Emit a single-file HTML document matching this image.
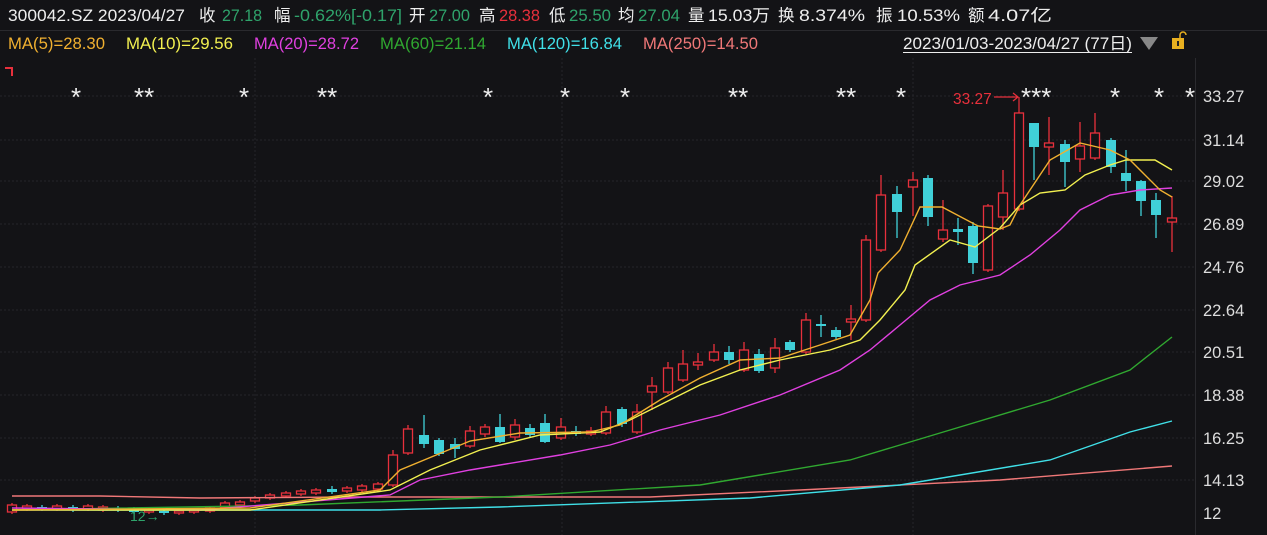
<!DOCTYPE html>
<html><head><meta charset="utf-8"><style>
html,body{margin:0;padding:0;background:#131316;width:1267px;height:535px;overflow:hidden}
svg{display:block}
text{font-family:"Liberation Sans","Noto Sans CJK SC",sans-serif}
.r{fill:#131316;stroke:#e8303c;stroke-width:1.3}
.c{fill:#40d0d8}
</style></head><body>
<svg width="1267" height="535" viewBox="0 0 1267 535" xmlns="http://www.w3.org/2000/svg">
<rect width="1267" height="535" fill="#131316"/>
<line x1="0" y1="30.5" x2="1267" y2="30.5" stroke="#2a2a2e"/>
<g font-size="16.5" fill="#eee">
<text x="8" y="21" textLength="177" lengthAdjust="spacingAndGlyphs">300042.SZ 2023/04/27</text>
<text x="199" y="21">收</text><text x="222" y="21" fill="#2fa36b" textLength="40" lengthAdjust="spacingAndGlyphs">27.18</text>
<text x="274" y="21">幅</text><text x="294" y="21" fill="#2fa36b" textLength="108" lengthAdjust="spacingAndGlyphs">-0.62%[-0.17]</text>
<text x="409" y="21">开</text><text x="429" y="21" fill="#2fa36b" textLength="41" lengthAdjust="spacingAndGlyphs">27.00</text>
<text x="479" y="21">高</text><text x="499" y="21" fill="#e8303c" textLength="41" lengthAdjust="spacingAndGlyphs">28.38</text>
<text x="549" y="21">低</text><text x="569" y="21" fill="#2fa36b" textLength="42" lengthAdjust="spacingAndGlyphs">25.50</text>
<text x="618" y="21">均</text><text x="638" y="21" fill="#2fa36b" textLength="42" lengthAdjust="spacingAndGlyphs">27.04</text>
<text x="688" y="21">量</text><text x="708" y="21" textLength="62" lengthAdjust="spacingAndGlyphs">15.03万</text>
<text x="778" y="21">换</text><text x="799" y="21" textLength="66" lengthAdjust="spacingAndGlyphs">8.374%</text>
<text x="876" y="21">振</text><text x="897" y="21" textLength="63" lengthAdjust="spacingAndGlyphs">10.53%</text>
<text x="968" y="21">额</text><text x="988" y="21" textLength="64" lengthAdjust="spacingAndGlyphs">4.07亿</text>
</g>
<g font-size="16.5">
<text x="8" y="49" fill="#f0b030" textLength="97" lengthAdjust="spacingAndGlyphs">MA(5)=28.30</text>
<text x="126" y="49" fill="#f2f050" textLength="107" lengthAdjust="spacingAndGlyphs">MA(10)=29.56</text>
<text x="254" y="49" fill="#e040e0" textLength="105" lengthAdjust="spacingAndGlyphs">MA(20)=28.72</text>
<text x="380" y="49" fill="#30a830" textLength="106" lengthAdjust="spacingAndGlyphs">MA(60)=21.14</text>
<text x="507" y="49" fill="#40e0e8" textLength="115" lengthAdjust="spacingAndGlyphs">MA(120)=16.84</text>
<text x="643" y="49" fill="#f07878" textLength="115" lengthAdjust="spacingAndGlyphs">MA(250)=14.50</text>
<text x="903" y="49" fill="#eee" textLength="229" lengthAdjust="spacingAndGlyphs">2023/01/03-2023/04/27 (77日)</text>
</g>
<line x1="903" y1="52.5" x2="1132" y2="52.5" stroke="#eee"/>
<polygon points="1140,37 1158,37 1149,50" fill="#888"/>
<rect x="1172" y="38" width="12" height="11" fill="#e8b020"/>
<rect x="1177" y="41" width="2" height="5" fill="#222"/>
<path d="M1180 38 v-3 a3 3 0 0 1 6 0" fill="none" stroke="#e8b020" stroke-width="1.5"/>
<path d="M5 68 H12 V76" fill="none" stroke="#e8303c" stroke-width="2"/>
<g stroke="#26262a" stroke-dasharray="2,2">
<line x1="0" y1="96" x2="1195" y2="96"/><line x1="0" y1="140" x2="1195" y2="140"/><line x1="0" y1="181" x2="1195" y2="181"/><line x1="0" y1="224" x2="1195" y2="224"/><line x1="0" y1="267" x2="1195" y2="267"/><line x1="0" y1="310" x2="1195" y2="310"/><line x1="0" y1="352" x2="1195" y2="352"/><line x1="0" y1="395" x2="1195" y2="395"/><line x1="0" y1="438" x2="1195" y2="438"/><line x1="0" y1="480" x2="1195" y2="480"/>
<line x1="255" y1="58" x2="255" y2="535"/><line x1="562" y1="58" x2="562" y2="535"/><line x1="913" y1="58" x2="913" y2="535"/>
</g>
<line x1="1195.5" y1="58" x2="1195.5" y2="535" stroke="#2a2a2e"/>
<g font-size="16.5" fill="#ddd">
<text x="1203" y="102">33.27</text><text x="1203" y="146">31.14</text><text x="1203" y="187">29.02</text><text x="1203" y="230">26.89</text><text x="1203" y="273">24.76</text><text x="1203" y="316">22.64</text><text x="1203" y="358">20.51</text><text x="1203" y="401">18.38</text><text x="1203" y="444">16.25</text><text x="1203" y="486">14.13</text><text x="1203" y="519">12</text>
</g>
<g font-size="26" fill="#eee">
<text x="71" y="106">*</text><text x="134" y="106">**</text><text x="239" y="106">*</text><text x="317" y="106">**</text><text x="483" y="106">*</text><text x="560" y="106">*</text><text x="620" y="106">*</text><text x="728" y="106">**</text><text x="836" y="106">**</text><text x="896" y="106">*</text><text x="1021" y="106">***</text><text x="1110" y="106">*</text><text x="1154" y="106">*</text><text x="1185" y="106">*</text>
</g>
<text x="953" y="104" font-size="15.5" fill="#e8303c">33.27</text>
<path d="M994 97 H1018 M1013 93 L1018 97 L1013 101 M1019 97 V112" fill="none" stroke="#e8303c" stroke-width="1.2"/>
<path fill="none" stroke="#e8303c" stroke-width="1.3" d="M12 503V514M27 504V511M57 504V511M88 504V511M103 505V512M149 508V514M179 509V515M194 508V514M210 506V513M225 501V509M240 500V507M255 496V503M270 493V500M286 491V498M301 489V496M316 488V495M347 486V493M362 484V492M378 482V491M393 450V487M408 425V455M470 426V448M485 424V437M515 419V440M561 418V440M591 427V436M606 406V435M637 404V434M652 377V410M668 362V394M683 350V382M698 353V370M714 344V362M744 342V372M775 338V373M806 313V354M851 305V340M866 235V322M881 175V252M913 172V216M943 200V242M988 204V272M1003 170V230M1019 112V211M1049 117V175M1080 122V172M1095 113V160M1172 196V252"/>
<path fill="none" stroke="#40d0d8" stroke-width="1.3" d="M42 505V511M73 505V512M118 506V512M134 507V514M164 509V515M332 486V494M424 415V448M439 438V456M455 438V458M500 414V443M530 424V437M545 414V443M576 426V436M622 407V427M729 346V364M759 349V373M790 340V352M821 315V337M836 327V339M897 186V238M928 175V226M958 218V245M973 222V274M1034 123V180M1065 140V187M1111 138V173M1126 150V191M1141 180V216M1156 193V238"/>
<g>
<rect class="r" x="7.5" y="505" width="9" height="7"/><rect class="r" x="22.5" y="506" width="9" height="3"/><rect class="r" x="52.5" y="506" width="9" height="3"/><rect class="r" x="83.5" y="506" width="9" height="3"/><rect class="r" x="98.5" y="507" width="9" height="3"/><rect class="r" x="144.5" y="510" width="9" height="2"/><rect class="r" x="174.5" y="511" width="9" height="2"/><rect class="r" x="189.5" y="510" width="9" height="2"/><rect class="r" x="205.5" y="508" width="9" height="3"/><rect class="r" x="220.5" y="503" width="9" height="4"/><rect class="r" x="235.5" y="502" width="9" height="3"/><rect class="r" x="250.5" y="498" width="9" height="3"/><rect class="r" x="265.5" y="495" width="9" height="3"/><rect class="r" x="281.5" y="493" width="9" height="3"/><rect class="r" x="296.5" y="491" width="9" height="3"/><rect class="r" x="311.5" y="490" width="9" height="3"/><rect class="r" x="342.5" y="488" width="9" height="3"/><rect class="r" x="357.5" y="486" width="9" height="4"/><rect class="r" x="373.5" y="484" width="9" height="5"/>
<rect class="r" x="388.5" y="455" width="9" height="30"/><rect class="r" x="403.5" y="429" width="9" height="24"/><rect class="r" x="465.5" y="431" width="9" height="15"/><rect class="r" x="480.5" y="427" width="9" height="7"/><rect class="r" x="510.5" y="425" width="9" height="12"/><rect class="r" x="556.5" y="427" width="9" height="11"/><rect class="r" x="586.5" y="431" width="9" height="3"/><rect class="r" x="601.5" y="412" width="9" height="21"/><rect class="r" x="632.5" y="412" width="9" height="20"/><rect class="r" x="647.5" y="386" width="9" height="6"/><rect class="r" x="663.5" y="368" width="9" height="24"/><rect class="r" x="678.5" y="364" width="9" height="16"/><rect class="r" x="693.5" y="362" width="9" height="3"/><rect class="r" x="709.5" y="352" width="9" height="8"/><rect class="r" x="739.5" y="350" width="9" height="20"/><rect class="r" x="770.5" y="348" width="9" height="20"/><rect class="r" x="801.5" y="320" width="9" height="32"/><rect class="r" x="846.5" y="319" width="9" height="3"/><rect class="r" x="861.5" y="240" width="9" height="80"/><rect class="r" x="876.5" y="195" width="9" height="55"/><rect class="r" x="908.5" y="180" width="9" height="7"/><rect class="r" x="938.5" y="230" width="9" height="9"/><rect class="r" x="983.5" y="206" width="9" height="64"/><rect class="r" x="998.5" y="193" width="9" height="24"/><rect class="r" x="1014.5" y="113" width="9" height="96"/><rect class="r" x="1044.5" y="143" width="9" height="4"/><rect class="r" x="1075.5" y="146" width="9" height="13"/><rect class="r" x="1090.5" y="133" width="9" height="25"/><rect class="r" x="1167.5" y="218" width="9" height="4"/>
<rect class="c" x="37" y="507" width="10" height="2"/><rect class="c" x="68" y="507" width="10" height="3"/><rect class="c" x="113" y="508" width="10" height="2"/><rect class="c" x="129" y="509" width="10" height="3"/><rect class="c" x="159" y="511" width="10" height="2"/><rect class="c" x="327" y="489" width="10" height="3"/><rect class="c" x="419" y="435" width="10" height="9"/><rect class="c" x="434" y="440" width="10" height="14"/><rect class="c" x="450" y="444" width="10" height="5"/><rect class="c" x="495" y="427" width="10" height="15"/><rect class="c" x="525" y="428" width="10" height="7"/><rect class="c" x="540" y="423" width="10" height="19"/><rect class="c" x="571" y="431" width="10" height="3"/><rect class="c" x="617" y="409" width="10" height="15"/><rect class="c" x="724" y="352" width="10" height="8"/><rect class="c" x="754" y="354" width="10" height="17"/><rect class="c" x="785" y="342" width="10" height="8"/><rect class="c" x="816" y="324" width="10" height="2"/><rect class="c" x="831" y="330" width="10" height="7"/><rect class="c" x="892" y="194" width="10" height="18"/><rect class="c" x="923" y="178" width="10" height="39"/><rect class="c" x="953" y="229" width="10" height="3"/><rect class="c" x="968" y="226" width="10" height="37"/><rect class="c" x="1029" y="123" width="10" height="24"/><rect class="c" x="1060" y="144" width="10" height="18"/><rect class="c" x="1106" y="140" width="10" height="27"/><rect class="c" x="1121" y="173" width="10" height="8"/><rect class="c" x="1136" y="181" width="10" height="20"/><rect class="c" x="1151" y="200" width="10" height="15"/>
</g>
<g fill="none" stroke-width="1.4">
<polyline stroke="#f07878" points="12,496 100,496 200,498 350,497 600,497 650,497 800,490 1000,480 1172,466"/>
<polyline stroke="#40e0e8" points="12,510 380,510 500,507 750,498 900,485 1050,460 1130,432 1172,421"/>
<polyline stroke="#30a830" points="12,510 300,505 500,497 700,485 850,460 950,430 1050,400 1130,370 1172,337"/>
<polyline stroke="#e040e0" points="12,508 200,510 390,495 420,480 470,470 560,455 610,445 660,430 720,415 780,395 840,370 870,350 900,325 930,300 960,285 1000,275 1030,255 1060,230 1080,210 1110,195 1140,190 1172,188"/>
<polyline stroke="#f2f050" points="12,510 250,510 390,490 430,470 480,450 540,435 600,432 630,420 670,400 700,385 740,370 780,360 830,350 860,340 880,320 905,290 915,265 950,240 975,247 1000,228 1020,205 1040,193 1065,190 1085,175 1110,165 1126,160 1155,160 1172,170"/>
<polyline stroke="#f0b030" points="12,510 250,508 380,490 400,470 470,441 520,433 590,432 620,425 660,400 700,378 740,360 780,358 820,345 850,335 870,300 878,273 900,250 920,207 942,207 978,226 1000,229 1010,225 1020,205 1050,160 1080,143 1110,150 1130,160 1160,190 1172,197"/>
</g>
<text x="130" y="521" font-size="14" fill="#2fa36b">12→</text>
</svg>
</body></html>
